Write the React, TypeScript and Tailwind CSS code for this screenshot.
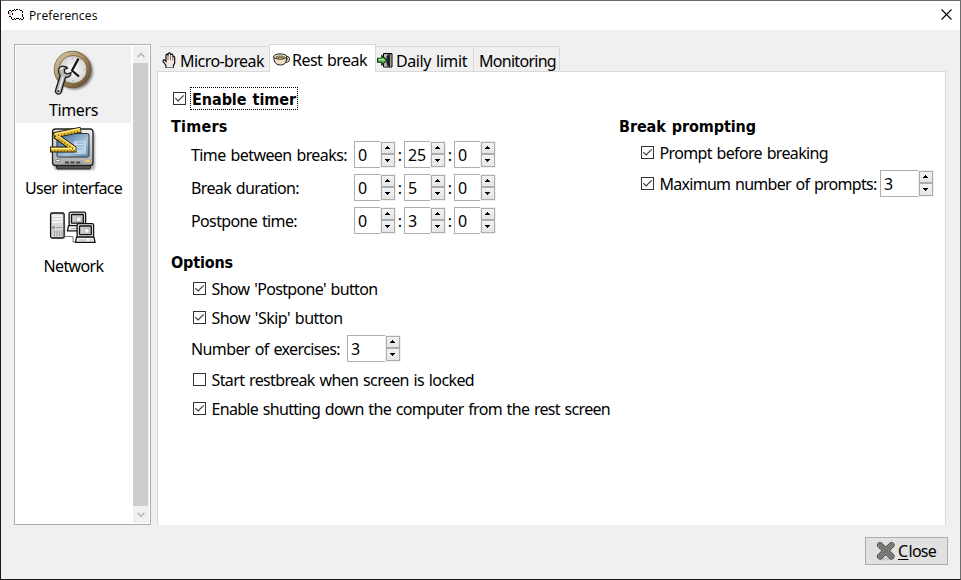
import React, { useLayoutEffect, useRef, useState } from "react";

/** Text line whose letter spacing adapts so that it fills a given width. */
function Fit({ w, children, className = "" }: { w: number; children: string; className?: string }) {
  const ref = useRef<HTMLSpanElement>(null);
  const [spacing, setSpacing] = useState(0);
  useLayoutEffect(() => {
    if (ref.current) {
      const natural = ref.current.getBoundingClientRect().width;
      setSpacing((w - natural) / children.length);
    }
  }, []);
  return (
    <span ref={ref} className={"inline-block shrink-0 whitespace-nowrap [word-spacing:1.2px] " + className} style={{ letterSpacing: spacing }}>
      {children}
    </span>
  );
}

const bold = "font-['DejaVu_Sans_Condensed','DejaVu_Sans',sans-serif] font-bold [font-stretch:condensed]";

function Check({ on = true }: { on?: boolean }) {
  return (
    <svg width="13" height="13" viewBox="0 0 13 13" className="shrink-0">
      <rect x=".5" y=".5" width="12" height="12" fill="#fff" stroke="#333" />
      {on && <path d="M2.300 6.200 5.100 9 10.700 3.400" fill="none" stroke="#3c3c3c" strokeWidth="1.200" />}
    </svg>
  );
}

function Spin({ value, wide = false }: { value: string; wide?: boolean }) {
  return (
    <div className="flex h-[27px] shrink-0">
      <div className={"flex items-center border border-r-0 border-[#abadb3] bg-white pl-[3px] " + (wide ? "w-[38px]" : "w-[26px]")}>
        <Fit w={value.length * 9}>{value}</Fit>
      </div>
      <div className="flex w-4 flex-col bg-[#f0f0f0] py-px pl-px pr-px">
        {["M2 0h1v1H2zM1 1h3v1H1zM0 2h5v1H0z", "M0 0h5v1H0zM1 1h3v1H1zM2 2h1v1H2z"].map((d, i) => (
          <div key={i} className="flex h-3 border border-[#acacac] bg-linear-to-b from-[#f2f2f2] to-[#e5e5e5] pl-[3px] pt-[3px] last:h-[13px] last:pt-1">
            <svg width="5" height="3" viewBox="0 0 5 3" shapeRendering="crispEdges"><path d={d} fill="#000" /></svg>
          </div>
        ))}
      </div>
    </div>
  );
}

function TimeRow({ label, w, values }: { label: string; w: number; values: string[] }) {
  return (
    <div className="flex h-[27px] items-center pl-[33px]">
      <div className="w-[163px]"><Fit w={w}>{label}</Fit></div>
      {values.map((v, i) => (
        <div key={i} className="flex items-center">
          {i > 0 && <span className="w-2 text-center">:</span>}
          <Spin value={v} />
        </div>
      ))}
    </div>
  );
}

function CheckRow({ label, w, on, className = "" }: { label: string; w: number; on?: boolean; className?: string }) {
  return (
    <div className={"flex h-[27px] items-center gap-[5.500px] " + className}>
      <Check on={on} />
      <Fit w={w}>{label}</Fit>
    </div>
  );
}

function SheepIcon() {
  return (
    <svg width="16" height="13" viewBox="0 0 16 13" shapeRendering="crispEdges">
      <path d="M2 2h12v8H4V7H1V3h1z" fill="#fff" />
      <path d="M1 3h2v3H1zM2 6h1v1H2z" fill="#efb3ad" />
      <path
        d="M1 1h2v1H1zM0 2h1v3H0zM4 1h2v1H4zM3 2h1v1H3zM6 0h1v1H6zM8 0h2v1H8zM7 1h1v1H7zM11 0h1v1h-1zM12 1h2v1h-2zM14 2h1v2h-1zM14 5h1v3h-1zM15 8h1v2h-1zM4 4h1v2H4zM1 7h2v1H1zM3 8h1v2H3zM4 10h2v1H4zM6 9h1v1H6zM8 9h3v1H8zM7 10h1v1H7zM11 10h1v1h-1zM13 10h2v1h-2zM12 9h1v1h-1z"
        fill="#000"
      />
    </svg>
  );
}

function ClockIcon() {
  return (
    <svg width="48" height="48" viewBox="0 0 48 48" overflow="visible">
      <defs>
        <linearGradient id="rim" x1="0" y1="0" x2="1" y2="1"><stop stopColor="#e0d2b4" /><stop offset=".5" stopColor="#a38657" /><stop offset="1" stopColor="#5d4525" /></linearGradient>
        <radialGradient id="face"><stop stopColor="#fff" /><stop offset="1" stopColor="#d2d2d0" /></radialGradient>
        <filter id="soft"><feGaussianBlur stdDeviation="1.200" /></filter>
      </defs>
      <circle cx="25.500" cy="23" r="18.500" fill="#333" opacity=".6" filter="url(#soft)" />
      <path d="m14 28-4 16" stroke="#444" strokeWidth="7" opacity=".4" filter="url(#soft)" />
      <circle cx="23.500" cy="21.500" r="18.300" fill="url(#rim)" stroke="#5e4c31" strokeWidth=".7" />
      <circle cx="24" cy="21.500" r="14" fill="url(#face)" stroke="#6d5733" strokeWidth=".8" />
      <path d="M24 9v2M24 32v2M35 21.500h2M32 11l-1 1M33 30l1 1" stroke="#aaa" />
      <path d="M29.500 10.500 23 22.500 30 28.500" fill="none" stroke="#111" strokeWidth="2.200" strokeLinejoin="round" />
      <path d="M15.500 18.500c-3-1-6 1-6 4.500 0 2 1 3.500 1.700 4.500L6.500 42.500c-.7 3.500 4.200 5 5.500 2l4.500-15c3.500 0 5.500-2 5.500-5l-3.500 1.500-3-1.500v-3l3-1.500c-1-1-1.500-1.300-3-1.500z" fill="#b5b5b5" stroke="#1c1c1c" strokeWidth="1.300" />
      <path d="m14 28.500-4.200 14M11 22c.5-1.500 1.500-2 3-2" fill="none" stroke="#f5f5f5" strokeWidth="1.300" />
      <circle cx="9.300" cy="43" r="1.100" fill="#333" />
    </svg>
  );
}

function DisplayIcon() {
  return (
    <svg width="48" height="48" viewBox="0 0 48 48">
      <defs>
        <linearGradient id="scr" x1="0" y1="0" x2="1" y2="1"><stop stopColor="#345f98" /><stop offset=".6" stopColor="#a8c4dd" /><stop offset="1" stopColor="#5487b9" /></linearGradient>
        <linearGradient id="case" x1="0" y1="0" x2="0" y2="1"><stop stopColor="#eee" /><stop offset="1" stopColor="#a8a8a8" /></linearGradient>
        <filter id="soft2"><feGaussianBlur stdDeviation="1" /></filter>
      </defs>
      <rect x="5" y="6" width="41" height="38" rx="3" fill="#555" opacity=".5" filter="url(#soft2)" />
      <path d="M7 38h35l-1 5H8z" fill="#555" stroke="#222" />
      <rect x="3.500" y="3" width="40.500" height="36.500" rx="3" fill="url(#case)" stroke="#222" strokeWidth="1.300" />
      <rect x="8" y="7.500" width="32" height="23.500" rx="1.500" fill="url(#scr)" stroke="#333" />
      <path d="M25 15h12v13H25z" fill="#d4e3ef" opacity=".7" />
      <path d="M28 17h7M28 20h7M28 23h5" stroke="#7aa5c9" />
      <path d="M7 33.500h4v2H7z" fill="#fff" stroke="#666" strokeWidth=".6" />
      <path d="M36.500 34h4v2h-4z" fill="#f2ce4b" />
      <path d="M16 36.500h17" stroke="#444" strokeWidth="2" strokeDasharray="4 1.500" />
      <path d="m6 9.500 20 14M4.500 9.300 32 3.700M1 23.500h26.500" stroke="#1e1a08" strokeWidth="6" />
      <path d="m7 10 19 13.500M5.500 9.100 31.300 3.900M1.800 23.500h25" stroke="#e9bf35" strokeWidth="4.200" />
      <path d="m8 9 18 12.500M5.500 8 31 2.700M2 22.500h24" stroke="#fff0a2" strokeWidth="1" />
      <path d="M6 10.300 31 5.200M2 24.800h24M10 13l15 10.500" stroke="#4b3808" strokeWidth="1.200" strokeDasharray="1 2.200" />
    </svg>
  );
}

function Pc({ x, y }: { x: number; y: number }) {
  return (
    <g transform={`translate(${x} ${y})`} stroke="#111" strokeWidth="1.300">
      <rect x=".6" y=".6" width="16.500" height="13.500" rx="1.500" fill="#e8e8e8" />
      <rect x="3" y="3" width="11.800" height="8.700" rx=".5" fill="#c9ced3" />
      <path d="M8 5.500h4.500V10H8z" fill="#f1f4f6" stroke="#999" strokeWidth=".6" />
      <path d="M0 14.200-1 19.400h19.500l-1-5.200z" fill="#f6f6f6" />
      <path d="M2 17h8M13 17h3" stroke="#aaa" strokeWidth="1" />
    </g>
  );
}

function NetworkIcon() {
  return (
    <svg width="48" height="34" viewBox="0 0 48 34">
      <path d="M16 25.500h8v5.500h5" fill="none" stroke="#777" strokeWidth="1" />
      <path d="M3 3h13l1 25H3z" fill="#aaa" opacity=".4" />
      <rect x="1.600" y="2" width="13.500" height="25" rx="1.500" fill="#d8d8d8" stroke="#111" strokeWidth="1.300" />
      <path d="M3 5h10.500M3 8h10.500M3 11h10.500" stroke="#fafafa" strokeWidth="1.500" />
      <circle cx="4.500" cy="16.500" r="1.200" fill="#777" />
      <path d="M7 16.500h6.500" stroke="#999" />
      <path d="M5.500 19.500v6M8 19.500v6M10.500 19.500v6M13 19.500v6" stroke="#888" strokeWidth=".8" />
      <Pc x={19.500} y={0.500} />
      <Pc x={27.500} y={12} />
    </svg>
  );
}

function HandIcon() {
  return (
    <svg width="14" height="17" viewBox="0 0 14 17">
      <path d="M4 15.500v-2L1 9.500l.5-1.700 1.300.2 1.200 1.500V3l1-1 1 1 .2-1.500L7.500.7l.9 1 .3 1L10 2l.8 1 .2 1.500 1-.2.700 1V11l-1.500 3v1.500z" fill="#f4e8df" stroke="#000" strokeWidth="1.100" />
      <path d="M6 3.500V8M8.500 3.500V8M10.800 5v3.500" stroke="#5d5049" strokeWidth=".8" />
      <path d="M4.500 15h6.500" stroke="#fff" />
    </svg>
  );
}

function CupIcon() {
  return (
    <svg width="17" height="13" viewBox="0 0 17 13">
      <path d="M12.500 4.500c4-1 4 4-.5 4" fill="none" stroke="#2c2721" strokeWidth="3" />
      <path d="M12.500 4.500c4-1 4 4-.5 4" fill="none" stroke="#eee2c9" strokeWidth="1.200" />
      <path d="M1 3.500v3.200c.5 3.500 3 5.300 6.500 5.300s5.500-1.800 6-5.300V3.500z" fill="#ecdfc6" stroke="#1f1a14" />
      <ellipse cx="7.200" cy="3.500" rx="6.500" ry="2.600" fill="#f8f2df" stroke="#1f1a14" />
      <ellipse cx="7.300" cy="3.800" rx="4.700" ry="1.500" fill="#8d8456" />
    </svg>
  );
}

function DoorIcon() {
  return (
    <svg width="16" height="15" viewBox="0 0 16 15">
      <path d="M6.500.500h8.500v13.500H6.500z" fill="#777" stroke="#000" />
      <path d="M7 1h3v12.500H7z" fill="#bbb" />
      <path d="m9.500 3 3.500-2v13L9.500 11.500z" fill="#222" />
      <path d="M13.800 1.500v12" stroke="#aaa" />
      <path d="M.6 5.300h4.200v-2.800L9.800 7.300l-5 4.700V9.300H.6z" fill="#68c15c" stroke="#082c07" strokeWidth="1.100" />
      <path d="M1.500 6.300H6l1.500 1" fill="none" stroke="#c5f2ba" />
    </svg>
  );
}

function StopIcon() {
  return (
    <svg width="20" height="20" viewBox="0 0 20 20">
      <ellipse cx="10" cy="18" rx="7" ry="1.500" fill="#bbb" opacity=".7" />
      <path d="M4 4.200 15.500 15.500M15.500 4.200 4 15.500" stroke="#454744" strokeWidth="6" strokeLinecap="round" />
      <path d="M4 4.200 15.500 15.500M15.500 4.200 4 15.500" stroke="#9a9c98" strokeWidth="4.200" strokeLinecap="round" />
      <path d="M4 4.200 15.500 15.500M15.500 4.200 4 15.500" stroke="#747672" strokeWidth="3" strokeLinecap="round" />
    </svg>
  );
}

function Arrow({ up = false }: { up?: boolean }) {
  return (
    <div className="flex h-[17px] shrink-0 items-center justify-center pr-px">
      <svg width="8" height="6" viewBox="0 0 8 6"><path d={up ? "M.7 5 4 1.700 7.300 5" : "M.7 1 4 4.300 7.300 1"} fill="none" stroke="#bcbcbc" strokeWidth="1.800" /></svg>
    </div>
  );
}

function SideItem({ label, w, selected = false, children }: { label: string; w: number; selected?: boolean; children: React.ReactNode }) {
  return (
    <div className="flex h-[78px] flex-col">
      <div className={"flex h-[77px] flex-col items-center " + (selected ? "bg-[#f0f0f0]" : "")}>
        <div className="flex h-[51px] items-center justify-center pr-[2px]">{children}</div>
        <Fit w={w} className="mt-[2px]">{label}</Fit>
      </div>
    </div>
  );
}

export default function App() {
  return (
    <div className="flex h-[580px] w-[961px] flex-col border border-b-[#1c191c] border-l-[#1c191c] border-r-[#6c6c6c] border-t-[#6c6c6c] bg-[#f0f0f0] font-['Noto_Sans',sans-serif] text-[16px] leading-[22px] text-black">
      <header className="flex h-[29px] shrink-0 items-center bg-white pl-[7px] pr-2">
        <SheepIcon />
        <Fit w={68.5} className="ml-[5px] font-['Open_Sans',sans-serif] text-[12px]">Preferences</Fit>
        <svg className="mb-[2px] ml-auto" width="11" height="11" viewBox="0 0 11 11"><path d="m.5.5 10 10m0-10-10 10" stroke="#000" strokeWidth="1.100" /></svg>
      </header>

      <div className="flex h-[495px] shrink-0 pl-[13px] pt-[14px]">
        <aside className="flex h-[481px] w-[137px] border border-[#abadb3] bg-white">
          <div className="w-[116px] pl-px pt-px">
            <SideItem label="Timers" w={49} selected><ClockIcon /></SideItem>
            <SideItem label="User interface" w={97}><DisplayIcon /></SideItem>
            <SideItem label="Network" w={60}><NetworkIcon /></SideItem>
          </div>
          <div className="ml-[2px] mt-px flex h-[477px] w-4 flex-col bg-[#f0f0f0]">
            <Arrow up />
            <div className="mr-px flex-1 bg-[#cdcdcd]" />
            <Arrow />
          </div>
        </aside>

        <main className="ml-[6px] flex w-[789px] flex-col">
          <nav className="z-10 -mb-px flex h-7 items-end pl-[2px]">
            <div className="flex h-[26px] w-[110px] items-center gap-[4px] border-y border-[#d9d9d9] pl-[3px] pt-1">
              <div className="pb-[2px]"><HandIcon /></div><Fit w={84}>Micro-break</Fit>
            </div>
            <div className="flex h-7 w-[107px] items-center gap-[2px] border border-b-0 border-[#d9d9d9] bg-white pl-[3px] pt-[3px]">
              <div className="pb-[2px]"><CupIcon /></div><Fit w={75}>Rest break</Fit>
            </div>
            <div className="flex h-[26px] w-[98px] items-center gap-[3px] border-y border-r border-[#d9d9d9] pl-px pt-1">
              <div className="pb-[2px]"><DoorIcon /></div><Fit w={71}>Daily limit</Fit>
            </div>
            <div className="flex h-[26px] w-[86px] items-center border-y border-r border-[#d9d9d9] pl-[5px] pt-1">
              <Fit w={77}>Monitoring</Fit>
            </div>
          </nav>
          <section className="flex h-[454px] border border-b-0 border-[#d9d9d9] bg-white pt-[15px]">
            <div className="w-[461px]">
              <div className="flex h-[23px] items-center pl-[15px]">
                <Check />
                <div className="ml-1 flex h-[23px] w-[108px] items-center border border-dotted border-black pl-px pt-[2px]">
                  <Fit w={104} className={bold}>Enable timer</Fit>
                </div>
              </div>
              <div className="mt-[2px] flex h-[29px] items-center pl-[13px]"><Fit w={56.5} className={bold}>Timers</Fit></div>
              <div className="flex flex-col gap-[6px]">
                <TimeRow label="Time between breaks:" w={156} values={["0", "25", "0"]} />
                <TimeRow label="Break duration:" w={108} values={["0", "5", "0"]} />
                <TimeRow label="Postpone time:" w={106} values={["0", "3", "0"]} />
              </div>
              <div className="mt-[15px] flex h-[26px] items-center pl-[13px] pt-[2px]"><Fit w={62} className={bold}>Options</Fit></div>
              <CheckRow label="Show 'Postpone' button" w={166} className="pl-[35px]" />
              <CheckRow label="Show 'Skip' button" w={131} className="mt-[2px] pl-[35px]" />
              <div className="mt-1 flex h-[27px] items-center pl-[33px]">
                <div className="w-[156px]"><Fit w={149}>Number of exercises:</Fit></div>
                <Spin value="3" wide />
              </div>
              <CheckRow label="Start restbreak when screen is locked" w={262.5} on={false} className="mt-1 pl-[35px]" />
              <CheckRow label="Enable shutting down the computer from the rest screen" w={398.5} className="mt-[2px] pl-[35px]" />
            </div>
            <div className="pt-[25px]">
              <div className="flex h-[27px] items-center pt-[2px]"><Fit w={137} className={bold}>Break prompting</Fit></div>
              <CheckRow label="Prompt before breaking" w={168.5} className="pl-[22px]" />
              <div className="mt-1 flex">
                <CheckRow label="Maximum number of prompts:" w={217} className="w-[261px] pl-[22px]" />
                <Spin value="3" wide />
              </div>
            </div>
          </section>
        </main>
      </div>

      <footer className="flex justify-end pr-3 pt-3">
        <button className="flex h-7 w-[83px] items-center gap-[2px] border border-[#adadad] bg-[#e1e1e1] pl-[10px]">
          <StopIcon />
          <span className="flex"><Fit w={10.5} className="underline underline-offset-2">C</Fit><Fit w={27.5}>lose</Fit></span>
        </button>
      </footer>
    </div>
  );
}
